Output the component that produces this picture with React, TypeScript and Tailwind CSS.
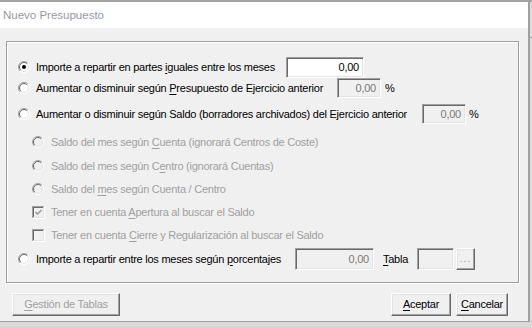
import React from "react";

const FONT = "font-['Liberation_Sans',Arial,sans-serif]";

function Radio({ checked = false, disabled = false }: { checked?: boolean; disabled?: boolean }) {
  return (
    <svg width="12" height="12" viewBox="0 0 12 12" className="shrink-0">
      <circle cx="6" cy="6" r="5.5" fill={disabled ? "#f0f0f0" : "#ffffff"} />
      <path d="M2.1 9.9 A5.5 5.5 0 0 1 9.9 2.1" stroke="#a0a0a0" strokeWidth="1" fill="none" />
      <path d="M2.8 9.2 A4.5 4.5 0 0 1 9.2 2.8" stroke="#696969" strokeWidth="1" fill="none" />
      <path d="M9.9 2.1 A5.5 5.5 0 0 1 2.1 9.9" stroke="#ffffff" strokeWidth="1" fill="none" />
      <path d="M9.2 2.8 A4.5 4.5 0 0 1 2.8 9.2" stroke="#e3e3e3" strokeWidth="1" fill="none" />
      {checked && <circle cx="6" cy="6" r="2" fill="#000" />}
    </svg>
  );
}

function Check({ checked = false }: { checked?: boolean }) {
  return (
    <svg width="13" height="13" viewBox="0 0 13 13" className="shrink-0">
      <rect x="0" y="0" width="13" height="13" fill="#ffffff" />
      <rect x="0" y="0" width="12" height="12" fill="#a0a0a0" />
      <rect x="1" y="1" width="11" height="11" fill="#e3e3e3" />
      <rect x="1" y="1" width="10" height="10" fill="#696969" />
      <rect x="2" y="2" width="9" height="9" fill="#f0f0f0" />
      {checked && (
        <path d="M3.5 6 L5.5 8 L9.5 4" stroke="#a0a0a0" strokeWidth="1.7" fill="none" />
      )}
    </svg>
  );
}

function Edit({
  w,
  h = 20,
  value,
  disabled = false,
}: {
  w: string;
  h?: number;
  value?: string;
  disabled?: boolean;
}) {
  const hc = h === 22 ? "h-[22px]" : h === 21 ? "h-[21px]" : "h-[20px]";
  return (
    <div
      className={`${w} ${hc} shrink-0 border border-t-[#a0a0a0] border-l-[#a0a0a0] border-r-white border-b-white shadow-[inset_1px_1px_0_#696969,inset_-1px_-1px_0_#e3e3e3] flex items-center justify-end pr-[4px] ${
        disabled ? "bg-[#f0f0f0] text-[#7a7a7a]" : "bg-white text-black"
      }`}
    >
      {value}
    </div>
  );
}

function U({ children }: { children: React.ReactNode }) {
  return <span className="underline underline-offset-[2px] decoration-1">{children}</span>;
}

function Btn({
  w,
  children,
  disabled = false,
}: {
  w: string;
  children: React.ReactNode;
  disabled?: boolean;
}) {
  return (
    <div
      className={`${w} h-[23px] shrink-0 flex items-center justify-center bg-[#f0f0f0] border border-t-white border-l-white border-r-[#696969] border-b-[#696969] shadow-[inset_-1px_-1px_0_#a0a0a0,inset_1px_1px_0_#e3e3e3] ${
        disabled ? "text-[#a0a0a0]" : "text-black"
      }`}
    >
      {children}
    </div>
  );
}

export default function App() {
  return (
    <div className={`w-[532px] h-[327px] flex flex-col bg-[#dadada] overflow-hidden ${FONT} text-[11px] tracking-[-0.25px] leading-none`}>
      <div className="h-[2px] w-full bg-[#a3a3a3] shrink-0" />
      <div className="flex flex-row shrink-0">
        {/* window */}
        <div className="w-[530px] h-[320px] flex flex-col border-r-2 border-b border-[#a0a0a0]">
          {/* title bar */}
          <div className="h-[26px] bg-white flex items-center pl-[3px] pt-[1px] text-[11.5px] tracking-normal text-[#9696a4]">
            Nuevo Presupuesto
          </div>
          {/* body */}
          <div className="flex-1 bg-[#f0f0f0] flex flex-col">
            <div className="mt-[13px] ml-[6px] w-[513px] h-[242px] border border-[#a0a0a0] shadow-[inset_1px_1px_0_#fff,1px_1px_0_#fff] flex flex-col pt-[15px]">
              {/* row 1 */}
              <div className="h-[20px] flex items-center pl-[11px]">
                <Radio checked />
                <span className="ml-[6px] w-[250px] shrink-0 text-black">
                  Importe a repartir en partes <U>i</U>guales entre los meses
                </span>
                <Edit w="w-[78px]" h={21} value="0,00" />
              </div>
              {/* row 2 */}
              <div className="h-[20px] mt-[1px] flex items-center pl-[11px]">
                <Radio />
                <span className="ml-[6px] w-[301px] shrink-0 text-black">
                  Aumentar o disminuir según <U>P</U>resupuesto de Ejercicio anterior
                </span>
                <Edit w="w-[44px]" value="0,00" disabled />
                <span className="ml-[4px] text-black">%</span>
              </div>
              {/* row 3 */}
              <div className="h-[20px] mt-[6px] flex items-center pl-[11px]">
                <Radio />
                <span className="ml-[6px] w-[386px] shrink-0 text-black">
                  Aumentar o disminuir según Saldo (borradores archivados) del Ejercicio anterior
                </span>
                <Edit w="w-[44px]" value="0,00" disabled />
                <span className="ml-[3px] text-black">%</span>
              </div>
              {/* sub options */}
              <div className="h-[20px] mt-[8px] flex items-center pl-[25px] text-[#a0a0a0]">
                <Radio disabled />
                <span className="ml-[7px]">
                  Saldo del mes según <U>C</U>uenta (ignorará Centros de Coste)
                </span>
              </div>
              <div className="h-[20px] mt-[4px] flex items-center pl-[25px] text-[#a0a0a0]">
                <Radio disabled />
                <span className="ml-[7px]">
                  Saldo del mes según C<U>e</U>ntro (ignorará Cuentas)
                </span>
              </div>
              <div className="h-[20px] mt-[3px] flex items-center pl-[25px] text-[#a0a0a0]">
                <Radio disabled />
                <span className="ml-[7px]">
                  Saldo del <U>m</U>es según Cuenta / Centro
                </span>
              </div>
              <div className="h-[20px] mt-[3px] flex items-center pl-[25px] text-[#a0a0a0]">
                <Check checked />
                <span className="ml-[6px]">
                  Tener en cuenta <U>A</U>pertura al buscar el Saldo
                </span>
              </div>
              <div className="h-[20px] mt-[3px] flex items-center pl-[25px] text-[#a0a0a0]">
                <Check />
                <span className="ml-[6px]">
                  Tener en cuenta <U>C</U>ierre y Regularización al buscar el Saldo
                </span>
              </div>
              {/* last row */}
              <div className="h-[20px] mt-[4px] flex items-center pl-[11px]">
                <Radio />
                <span className="ml-[6px] w-[259px] shrink-0 text-black">
                  Importe a repartir entre los meses según <U>p</U>orcentajes
                </span>
                <Edit w="w-[79px]" h={22} value="0,00" disabled />
                <span className="ml-[9px] w-[34px] shrink-0 text-black">
                  <U>T</U>abla
                </span>
                <Edit w="w-[37px]" h={22} disabled />
                <div className="ml-[2px] w-[19px] h-[22px] shrink-0 flex items-center justify-center bg-[#f0f0f0] border border-t-white border-l-white border-r-[#696969] border-b-[#696969] shadow-[inset_-1px_-1px_0_#a0a0a0,inset_1px_1px_0_#e3e3e3] text-[#a0a0a0] tracking-[1px] pb-[2px]">
                  ...
                </div>
              </div>
            </div>
            {/* buttons */}
            <div className="mt-[10px] flex items-center">
              <div className="ml-[12px]">
                <Btn w="w-[108px]" disabled>
                  <span>
                    <U>G</U>estión de Tablas
                  </span>
                </Btn>
              </div>
              <div className="ml-auto flex items-center gap-[5px] mr-[20px]">
                <Btn w="w-[60px]">
                  <span>
                    <U>A</U>ceptar
                  </span>
                </Btn>
                <Btn w="w-[52px]">
                  <span>
                    <U>C</U>ancelar
                  </span>
                </Btn>
              </div>
            </div>
          </div>
        </div>
        {/* right strip */}
        <div className="w-[2px] h-[320px] bg-[#dcdcdc] flex flex-col">
          <div className="h-[35px]" />
          <div className="h-[1px] bg-[#a0a0a0]" />
        </div>
      </div>
    </div>
  );
}
